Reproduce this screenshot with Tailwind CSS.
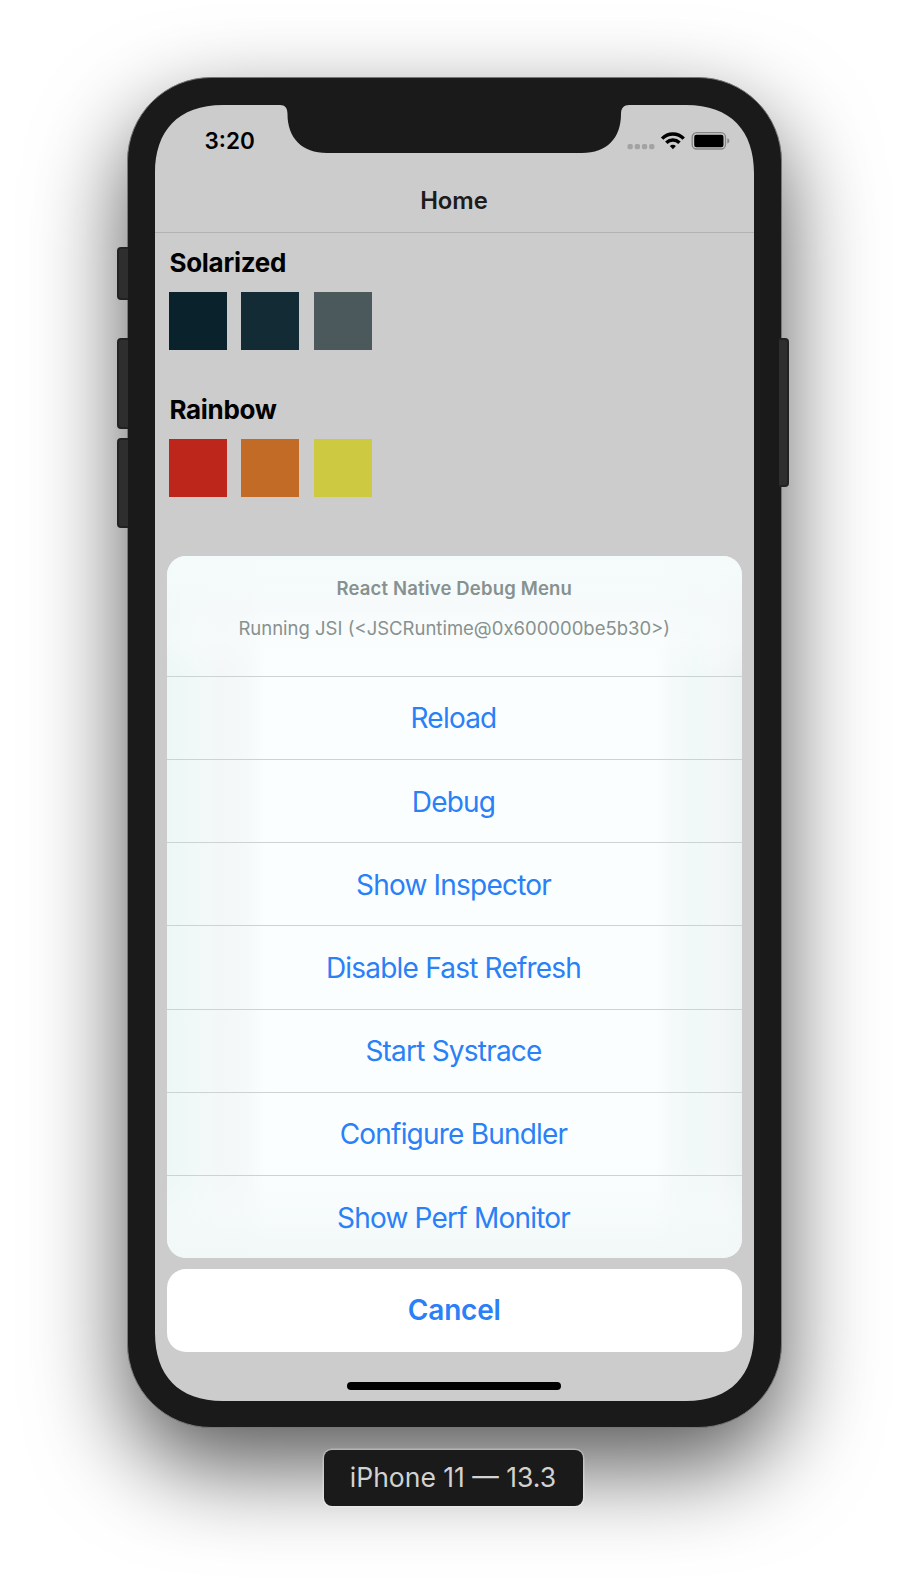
<!DOCTYPE html>
<html lang="en">
<head>
<meta charset="utf-8">
<title>iPhone 11 — 13.3</title>
<script src="https://cdn.jsdelivr.net/npm/@tailwindcss/browser@4"></script>
</head>
<body class="bg-white font-['Inter','Liberation_Sans',sans-serif]">
<div class="relative flex h-[1578px] w-[908px] flex-col items-center overflow-hidden pt-[77px]">
  <!-- device body -->
  <div class="relative h-[1351px] w-[655px] rounded-[84px] border border-[#777] bg-[#1a1a1a] px-[27px] pt-[27px] shadow-[0_38px_94px_rgba(0,0,0,0.66)]">
    <div class="relative flex h-[1296px] w-[599px] flex-col">
      <svg class="absolute inset-0" width="599" height="1296" viewBox="0 0 599 1296">
        <path fill="#ccc" d="M68 0H125C130 0 132.500 3 132.500 9C132.500 33 147 48 172 48H427C452 48 466 33 466 9C466 3 469 0 474 0H531C576 0 599 26 599 68V1228C599 1270 576 1296 531 1296H68C23 1296 0 1270 0 1228V68C0 26 23 0 68 0Z"/>
      </svg>
      <div class="relative flex h-[64px] justify-between pl-[50px] pr-[24px] pt-[22px]">
        <span class="text-[22.500px] font-semibold leading-[28px]">3:20</span>
        <svg width="103" height="20" viewBox="0 0 103 20" class="mt-[4px]">
          <g fill="#a3a3a3"><rect x="0.500" y="13" width="5.300" height="5.300" rx="1.700"/><rect x="7.700" y="13" width="5.300" height="5.300" rx="1.700"/><rect x="14.900" y="13" width="5.300" height="5.300" rx="1.700"/><rect x="22.100" y="13" width="5.300" height="5.300" rx="1.700"/></g>
          <g fill="none" stroke="#000" stroke-width="3.500"><path d="M35.100 7.600C41.100 1.400 50.700 1.400 56.700 7.600"/><path d="M39.300 11.700C43.200 8 48.600 8 52.500 11.700"/></g>
          <path d="M42.900 14.900C44.700 13.500 47.100 13.500 48.900 14.900L45.900 18.200Z"/>
          <rect x="65.200" y="1.700" width="33.300" height="16.300" rx="4.500" fill="none" stroke="#858585" stroke-width="1.300"/>
          <rect x="67.200" y="3.700" width="29.300" height="12.500" rx="2.200"/>
          <path fill="#858585" d="M100.300 7.300C103 8 103 12 100.300 12.500Z"/>
        </svg>
      </div>
      <div class="relative flex h-[64px] items-center justify-center border-b border-[#b2b2b2] text-[23.800px] font-semibold text-[#1c1c1c]"><span>Home</span></div>
      <div class="relative flex flex-col pl-[14.500px] pt-[14px]">
        <h2 class="pl-[0.500px] text-[26px] font-bold leading-[32px] tracking-[-0.300px]"><span>Solarized</span></h2>
        <div class="mt-[13px] flex gap-[14.400px]">
          <div class="size-[58px] bg-[#0a222b]"></div><div class="size-[58px] bg-[#132b34]"></div><div class="size-[58px] bg-[#4b595d]"></div>
        </div>
        <h2 class="mt-[44px] pl-[0.500px] text-[26px] font-bold leading-[32px] tracking-[-0.350px]"><span>Rainbow</span></h2>
        <div class="mt-[13px] flex gap-[14.400px]">
          <div class="size-[58px] bg-[#bd271b]"></div><div class="size-[58px] bg-[#c26b26]"></div><div class="size-[58px] bg-[#cdc941]"></div>
        </div>
      </div>
      <div class="relative ml-[12px] mr-[11.500px] mt-[58.500px] h-[702px] overflow-hidden rounded-[19px] bg-[#fbfefe] bg-[linear-gradient(90deg,#ecf7f6_0%,#f1f9f8_5%,#f4f7f8_9%,#f6f9fa_14%,#fbfefe_17%,#fbfefe_85%,#f4faf9_88%,#f0f9f8_92%,#f4f7f7_96%,#ecf3f2_100%)] text-center">
        <div class="absolute inset-x-0 top-0 h-[120px] bg-[linear-gradient(180deg,#f4fcfb,#f5f9f9cc_40%,#f9fcfc80_70%,#fbfefe00)]"></div>
        <div class="absolute inset-x-0 bottom-0 h-[95px] bg-[linear-gradient(0deg,#f1f8f7,#f5fafaaa_50%,#fbfefe00)]"></div>
        <div class="relative flex h-[120.300px] flex-col pt-[20.500px] text-[18.500px] leading-[24px] text-[#87918f]">
          <span class="font-semibold tracking-[0.170px]">React Native Debug Menu</span>
          <span class="mt-[16px]">Running JSI (&lt;JSCRuntime@0x600000be5b30&gt;)</span>
        </div>
        <div class="relative mr-[1.500px] text-[28px] tracking-[-0.790px] text-[#2a80f6] [&>div]:-mr-[1.500px] [&>div]:pr-[1.500px]">
          <div class="flex h-[83.200px] items-center justify-center border-t border-[#ccd3d4] pt-px"><span>Reload</span></div>
          <div class="flex h-[83.200px] items-center justify-center border-t border-[#ccd3d4] pt-px"><span>Debug</span></div>
          <div class="flex h-[83.200px] items-center justify-center border-t border-[#ccd3d4] pt-px"><span>Show Inspector</span></div>
          <div class="flex h-[83.200px] items-center justify-center border-t border-[#ccd3d4] pt-px"><span>Disable Fast Refresh</span></div>
          <div class="flex h-[83.200px] items-center justify-center border-t border-[#ccd3d4] pt-px"><span>Start Systrace</span></div>
          <div class="flex h-[83.200px] items-center justify-center border-t border-[#ccd3d4] pt-px"><span>Configure Bundler</span></div>
          <div class="flex h-[83.200px] items-center justify-center border-t border-[#ccd3d4] pt-px"><span>Show Perf Monitor</span></div>
        </div>
      </div>
      <div class="relative ml-[12px] mr-[11.500px] mt-[11.500px] flex h-[82.500px] items-center justify-center rounded-[19px] bg-white text-[28px] font-semibold tracking-[-0.200px] text-[#2a80f6]"><span>Cancel</span></div>
      <div class="relative ml-[192.500px] mt-[30.500px] h-[7.500px] w-[214px] rounded-full bg-black"></div>
    </div>
  </div>

  <!-- side buttons -->
  <div class="absolute left-[117px] top-[247px] h-[53px] w-[11px] rounded-l-[4px] border-2 border-r-0 border-[#222] bg-[#2e2e2e]"></div>
  <div class="absolute left-[117px] top-[338px] h-[91px] w-[11px] rounded-l-[4px] border-2 border-r-0 border-[#222] bg-[#2e2e2e]"></div>
  <div class="absolute left-[117px] top-[438px] h-[90px] w-[11px] rounded-l-[4px] border-2 border-r-0 border-[#222] bg-[#2e2e2e]"></div>
  <div class="absolute left-[779px] top-[338px] h-[149px] w-[10px] rounded-r-[4px] border-2 border-l-0 border-[#222] bg-[#2e2e2e]"></div>

  <div class="relative mr-[2px] mt-[22px] flex h-[56px] w-[259px] items-center justify-center rounded-[8px] bg-[#1a1a1a] text-[26.500px] text-[#d2d2d2] shadow-[0_0_0_1.500px_rgba(255,255,255,0.3)]"><span>iPhone 11 — 13.3</span></div>
</div>
</body>
</html>
